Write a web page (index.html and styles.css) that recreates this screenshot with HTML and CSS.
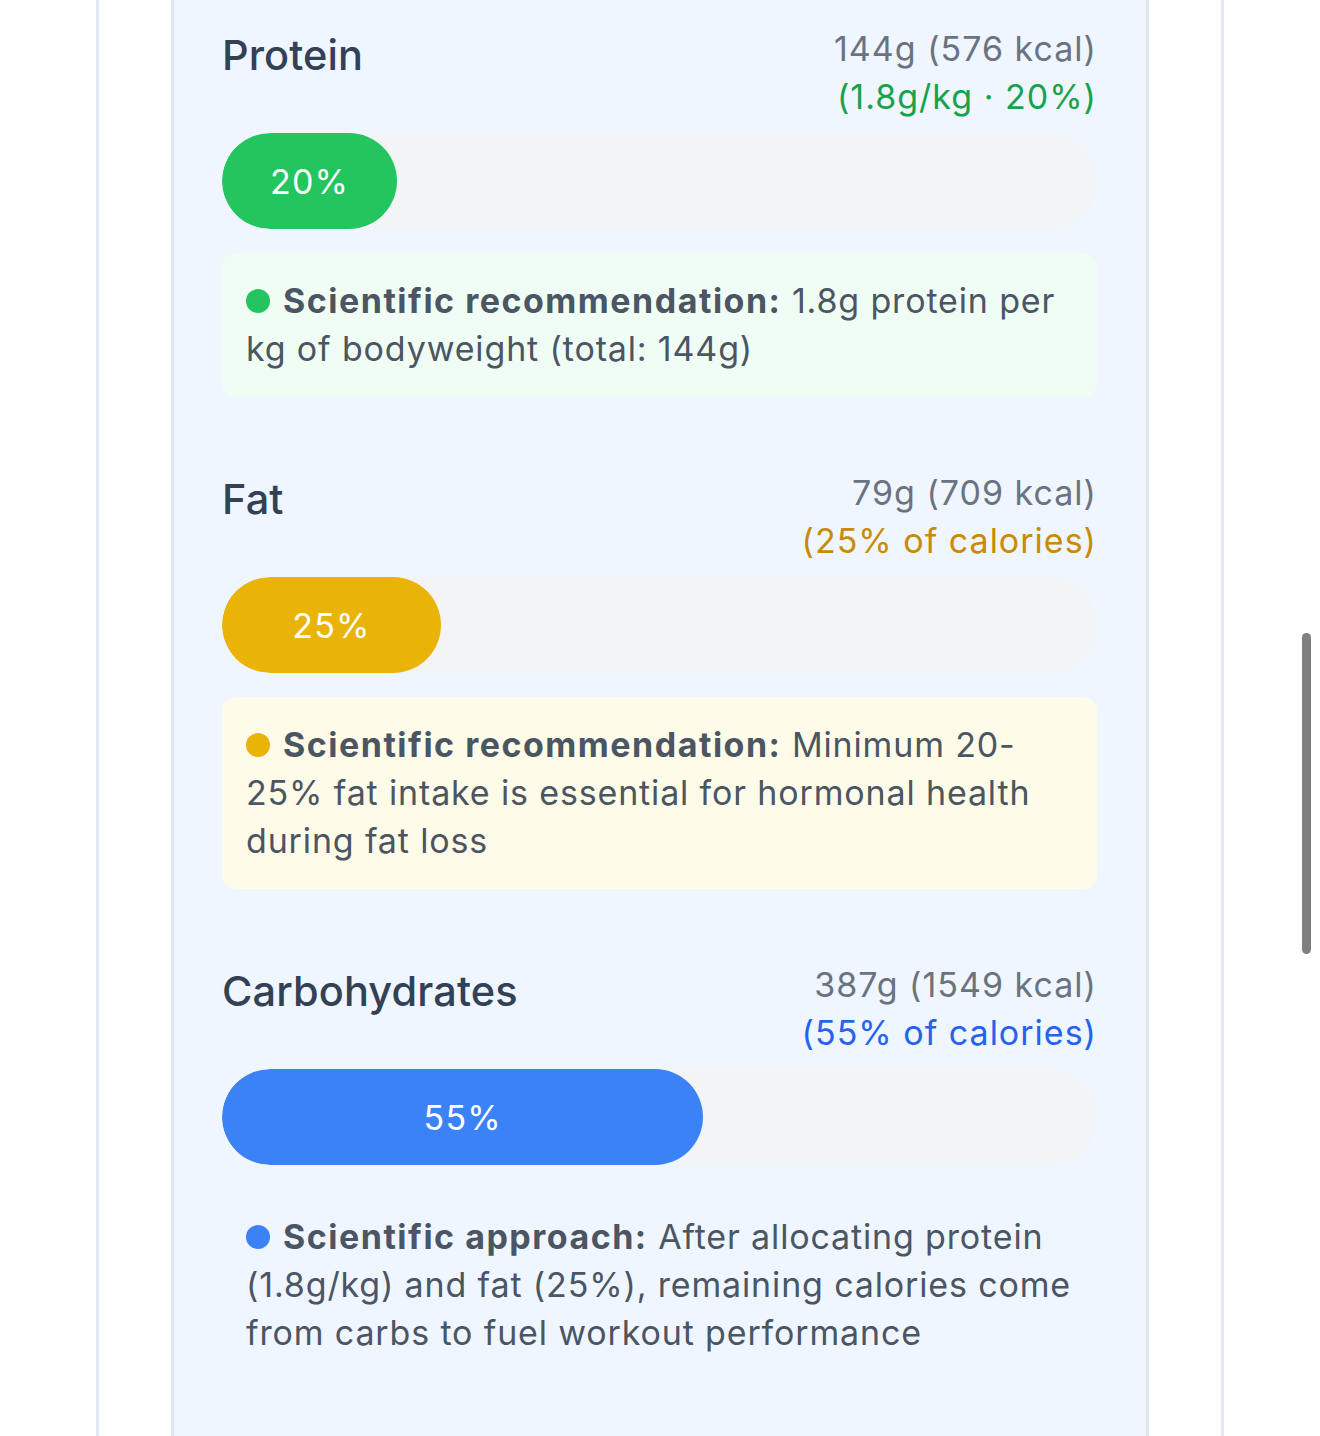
FILE: index.html
```html
<!DOCTYPE html>
<html lang="en">
<head>
<meta charset="utf-8">
<title>Macros</title>
<link rel="stylesheet" href="styles.css">
</head>
<body>
<div class="card">
  <div class="panel">
    <section class="macro">
      <div class="macro-head">
        <h3 class="macro-name">Protein</h3>
        <div class="macro-amount">
          <div class="amount">144g (576 kcal)</div>
          <div class="sub sub-green">(1.8g/kg · 20%)</div>
        </div>
      </div>
      <div class="track"><div class="fill fill-green" style="width:20%">20%</div></div>
      <p class="note note-green"><span class="dot dot-green"></span><strong>Scientific recommendation:</strong> 1.8g protein per kg of bodyweight (total: 144g)</p>
    </section>

    <section class="macro">
      <div class="macro-head">
        <h3 class="macro-name">Fat</h3>
        <div class="macro-amount">
          <div class="amount">79g (709 kcal)</div>
          <div class="sub sub-yellow">(25% of calories)</div>
        </div>
      </div>
      <div class="track"><div class="fill fill-yellow" style="width:25%">25%</div></div>
      <p class="note note-yellow"><span class="dot dot-yellow"></span><strong>Scientific recommendation:</strong> Minimum 20-25% fat intake is essential for hormonal health during fat loss</p>
    </section>

    <section class="macro">
      <div class="macro-head">
        <h3 class="macro-name">Carbohydrates</h3>
        <div class="macro-amount">
          <div class="amount">387g (1549 kcal)</div>
          <div class="sub sub-blue">(55% of calories)</div>
        </div>
      </div>
      <div class="track"><div class="fill fill-blue" style="width:55%">55%</div></div>
      <p class="note note-blue"><span class="dot dot-blue"></span><strong>Scientific approach:</strong> After allocating protein (1.8g/kg) and fat (25%), remaining calories come from carbs to fuel workout performance</p>
    </section>
  </div>
</div>
<div class="scrollbar"></div>
</body>
</html>
```

FILE: styles.css
```css
* { box-sizing: border-box; }

html, body {
  margin: 0;
  padding: 0;
  background: #ffffff;
  height: 1436px;
  overflow: hidden;
}

body {
  font-family: Inter, "Noto Sans", "Liberation Sans", sans-serif;
  padding: 0 96px;
}

.card {
  border-left: 3px solid #e2e8f0;
  border-right: 3px solid #e2e8f0;
  background: #ffffff;
  padding: 0 72px;
  min-height: 1436px;
}

.panel {
  background: #eff6ff;
  border-left: 3px solid #dfe7f1;
  border-right: 3px solid #dfe7f1;
  padding: 25px 49px 0 48px;
  min-height: 1436px;
}

.macro {
  margin-bottom: 72px;
}

.macro-head {
  display: flex;
  justify-content: space-between;
  align-items: flex-start;
  margin-bottom: 12px;
}

.macro-name {
  margin: 2px 0 0;
  font-size: 41.5px;
  line-height: 56px;
  font-weight: 500;
  color: #334155;
  letter-spacing: 0.1px;
}

.macro-amount {
  text-align: right;
  font-size: 34px;
  line-height: 48px;
  letter-spacing: 1px;
}

.amount { color: #6b7280; }
.sub-green { color: #16a34a; }
.sub-yellow { color: #ca8a04; }
.sub-blue { color: #2563eb; }

.track {
  height: 96px;
  border-radius: 48px;
  background: #f3f4f6;
  margin-bottom: 24px;
  overflow: hidden;
}

.fill {
  height: 100%;
  border-radius: 48px;
  display: flex;
  align-items: center;
  justify-content: center;
  color: #ffffff;
  font-size: 34px;
  font-weight: 400;
  letter-spacing: 1.1px;
}

.fill-green { background: #22c55e; }
.fill-yellow { background: #eab308; }
.fill-blue { background: #3b82f6; }

.note {
  margin: 0;
  padding: 24px;
  border-radius: 14px;
  font-size: 34px;
  line-height: 48px;
  letter-spacing: 0.85px;
  color: #4b5563;
}

.note strong { font-weight: 700; letter-spacing: 1.5px; }

.note-green { background: #f0fdf4; }
.note-yellow { background: #fefce8; }
.note-blue { background: transparent; }

.dot {
  display: inline-block;
  width: 24px;
  height: 24px;
  border-radius: 50%;
  margin-right: 13px;
  vertical-align: 0px;
}

.dot-green { background: #22c55e; }
.dot-yellow { background: #eab308; }
.dot-blue { background: #3b82f6; }

.scrollbar {
  position: fixed;
  left: 1302px;
  top: 633px;
  width: 9px;
  height: 321px;
  border-radius: 5px;
  background: #808080;
}
```
